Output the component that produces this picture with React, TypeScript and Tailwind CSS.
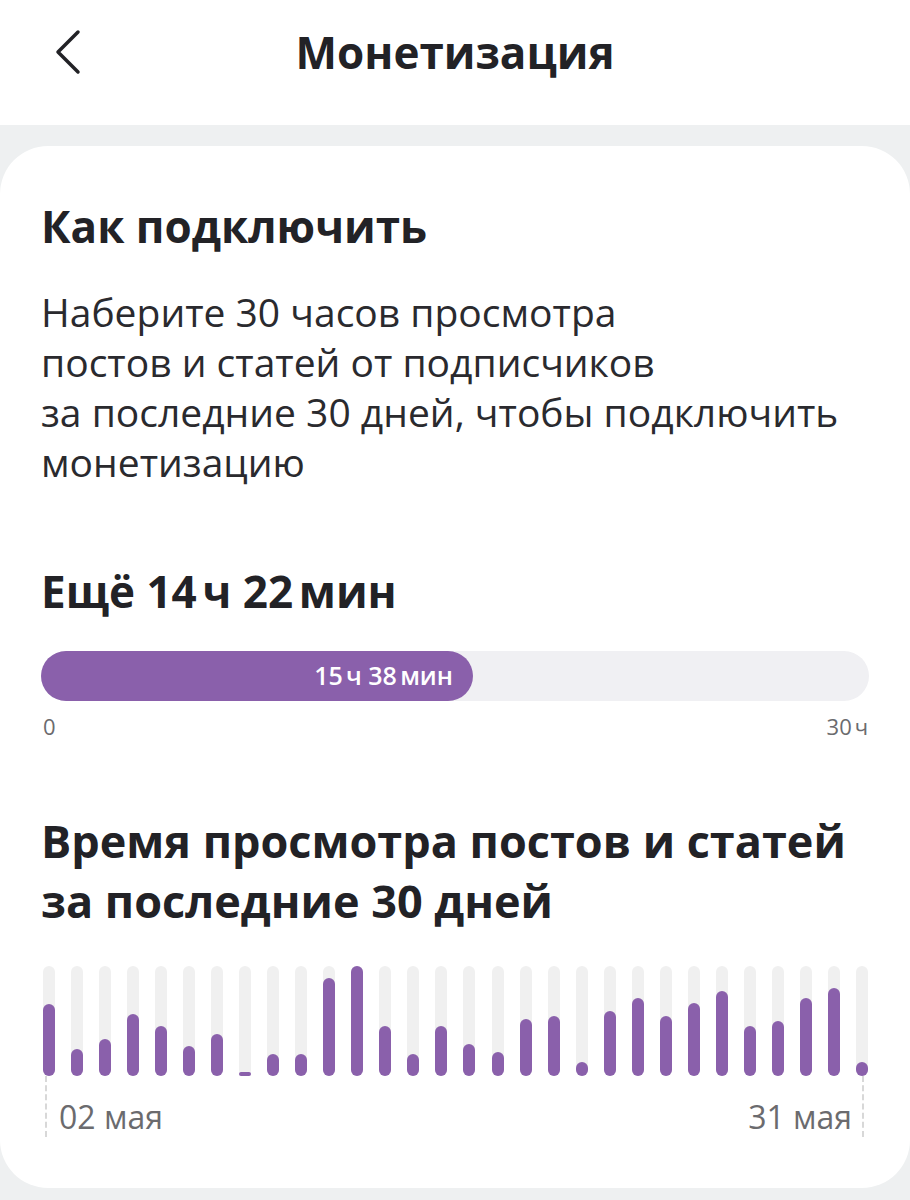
import React from "react";

const bars = [72, 27, 37, 62, 50, 30, 42, 4, 22, 22, 98, 110, 50, 22, 50, 32, 24, 57, 60, 14, 65, 78, 60, 73, 85, 50, 55, 78, 88, 14];

export default function App() {
  return (
    <div
      className="w-[910px] h-[1200px] overflow-hidden bg-[#eef0f1] text-[#222226]"
      style={{ fontFamily: "'Open Sans', 'Noto Sans', sans-serif" }}
    >
      <header className="h-[125px] bg-white grid grid-cols-[1fr_auto_1fr] items-start pt-[22px]">
        <div className="pl-[52px] pt-[7px]">
          <svg width="32" height="46" viewBox="0 0 32 46" fill="none">
            <path d="M26 3 L6 23 L26 43" stroke="#222226" strokeWidth="3.5" strokeLinecap="round" strokeLinejoin="round" />
          </svg>
        </div>
        <h1 className="text-[44px] leading-[60px] font-bold">Монетизация</h1>
        <div />
      </header>

      <div className="pt-[21px]">
        <div className="bg-white rounded-[48px] h-[1042px] px-[41px] pt-[52px]">
          <h2 className="text-[44px] leading-[56px] font-bold">Как подключить</h2>
          <p className="mt-[33px] text-[39px] leading-[50px] text-[#2a2a2e]">
            Наберите 30 часов просмотра
            <br />
            постов и статей от подписчиков
            <br />
            за последние 30 дней, чтобы подключить
            <br />
            монетизацию
          </p>

          <h2 className="mt-[76px] text-[44px] leading-[56px] font-bold">Ещё 14{"\u202F"}ч 22{"\u202F"}мин</h2>

          <div className="mt-[32px] h-[50px] rounded-full bg-[#f0f0f3] flex">
            <div className="w-[432px] h-full rounded-full bg-[#8a60ab] flex items-center justify-end pr-[20px]">
              <span className="text-white text-[25px] font-semibold">15{"\u202F"}ч 38{"\u202F"}мин</span>
            </div>
          </div>
          <div className="mt-[11px] flex justify-between text-[22px] leading-[28px] text-[#6b6b6e] tracking-[1px]">
            <span className="pl-[2px]">0</span>
            <span>30{"\u202F"}ч</span>
          </div>

          <h2 className="mt-[71px] text-[45px] leading-[60px] font-bold">
            Время просмотра постов и статей
            <br />
            за последние 30 дней
          </h2>

          <div className="mt-[35px] flex justify-between pl-[2px] pr-[1px] h-[110px]">
            {bars.map((h, i) => (
              <div key={i} className="w-[12px] h-full rounded-full bg-[#f0f0f0] flex flex-col justify-end">
                <div className="w-full rounded-full bg-[#8a60ab]" style={{ height: h }} />
              </div>
            ))}
          </div>
          <div className="flex justify-between items-start pl-[4px] pr-[5px]">
            <div className="flex items-start">
              <div className="h-[61px] border-l-2 border-dashed border-[#d8d8d8]" />
              <span className="ml-[12px] mt-[21px] text-[32px] leading-[40px] text-[#6b6b6e]">02 мая</span>
            </div>
            <div className="flex items-start">
              <span className="mr-[10px] mt-[21px] text-[32px] leading-[40px] text-[#6b6b6e]">31 мая</span>
              <div className="h-[61px] border-l-2 border-dashed border-[#d8d8d8]" />
            </div>
          </div>
        </div>
      </div>
    </div>
  );
}
